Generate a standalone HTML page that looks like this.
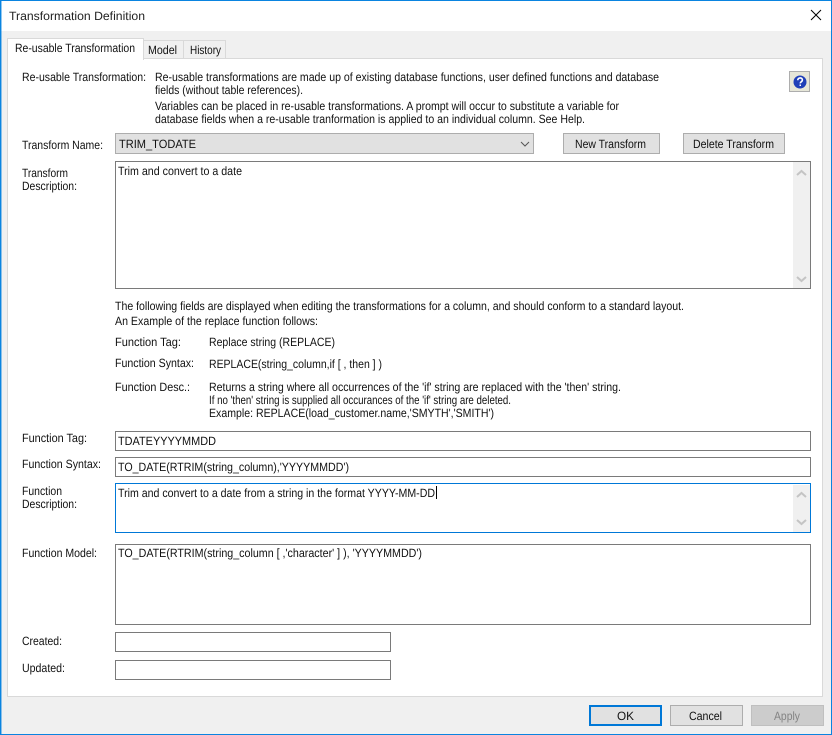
<!DOCTYPE html>
<html><head><meta charset="utf-8"><title>Transformation Definition</title>
<style>
html,body{margin:0;padding:0;background:#f0f0f0}
svg{display:block}
text{font-family:"Liberation Sans",sans-serif;font-size:12px;fill:#111;white-space:pre}
</style></head><body>
<svg width="832" height="735" viewBox="0 0 832 735" xmlns="http://www.w3.org/2000/svg" shape-rendering="crispEdges">
<rect width="832" height="735" fill="#0a84e0"/>
<rect x="1" y="1" width="830" height="733" fill="#f0f0f0"/>
<rect x="1" y="1" width="830" height="30" fill="#fff"/>
<rect x="1" y="1" width="1" height="733" fill="#0a84e0" opacity="0.45"/>
<!-- page -->
<rect x="7.5" y="58.5" width="815" height="638" fill="#fff" stroke="#d9d9d9"/>
<!-- tabs -->
<rect x="143.5" y="40.5" width="40" height="18" fill="#f0f0f0" stroke="#d9d9d9"/>
<rect x="183.5" y="40.5" width="42" height="18" fill="#f0f0f0" stroke="#d9d9d9"/>
<rect x="7.5" y="38.5" width="136" height="21" fill="#fff" stroke="#d9d9d9"/>
<rect x="8" y="57" width="135" height="3" fill="#fff"/>
<!-- close -->
<path d="M811 10L821 20M821 10L811 20" stroke="#000" stroke-width="1" fill="none" shape-rendering="auto"/>
<!-- help -->
<rect x="789.5" y="71.5" width="20" height="20" fill="#e6e6d8" stroke="#adadad"/>
<circle cx="800" cy="82" r="6.5" fill="#1f3fb8" shape-rendering="auto"/>
<path d="M797.8 80.2c0-3 4.6-3 4.6-.2 0 1.8-2.2 1.8-2.2 3.4" stroke="#fff" stroke-width="1.6" fill="none" shape-rendering="auto"/>
<rect x="799.3" y="84.4" width="1.8" height="1.8" fill="#fff"/>
<!-- combo -->
<rect x="115.5" y="133.5" width="418" height="20" fill="#e1e1e1" stroke="#adadad"/>
<path d="M521 142l4 4 4-4" stroke="#555" fill="none" shape-rendering="auto"/>
<!-- buttons -->
<rect x="563.5" y="133.5" width="96" height="20" fill="#e1e1e1" stroke="#adadad"/>
<rect x="683.5" y="133.5" width="101" height="20" fill="#e1e1e1" stroke="#adadad"/>
<!-- boxes -->
<rect x="115.5" y="161.5" width="695" height="127" fill="#fff" stroke="#7a7a7a"/>
<rect x="793" y="162" width="17" height="126" fill="#f0f0f0"/>
<path d="M797 175l4.500-4 4.500 4M797 277l4.500 4 4.500-4" stroke="#c4c4c4" stroke-width="2" fill="none" shape-rendering="auto"/>
<rect x="115.5" y="431.500" width="695" height="19" fill="#fff" stroke="#7a7a7a"/>
<rect x="115.5" y="457.500" width="695" height="19" fill="#fff" stroke="#7a7a7a"/>
<rect x="115.5" y="483.500" width="695" height="49" fill="#fff" stroke="#0078d7"/>
<rect x="793" y="485" width="17" height="47" fill="#f0f0f0"/>
<path d="M797 497l4.500-4 4.500 4M797 520l4.500 4 4.500-4" stroke="#c4c4c4" stroke-width="2" fill="none" shape-rendering="auto"/>
<rect x="436" y="486" width="1" height="13" fill="#000"/>
<rect x="115.5" y="544.500" width="695" height="80" fill="#fff" stroke="#7a7a7a"/>
<rect x="115.5" y="632.500" width="275" height="19" fill="#fff" stroke="#7a7a7a"/>
<rect x="115.5" y="660.500" width="275" height="19" fill="#fff" stroke="#7a7a7a"/>
<!-- bottom buttons -->
<rect x="590" y="706" width="71" height="19" fill="#e1e1e1" stroke="#0078d7" stroke-width="2"/>
<rect x="670.500" y="705.500" width="72" height="20" fill="#e1e1e1" stroke="#adadad"/>
<rect x="751.500" y="705.500" width="72" height="20" fill="#cccccc" stroke="#bfbfbf"/>

<g text-rendering="geometricPrecision" shape-rendering="auto" lengthAdjust="spacingAndGlyphs">
<text lengthAdjust="spacingAndGlyphs" x="9" y="20" textLength="136" style="fill:#222">Transformation Definition</text>
<text lengthAdjust="spacingAndGlyphs" x="15" y="52" textLength="120">Re-usable Transformation</text>
<text lengthAdjust="spacingAndGlyphs" x="148" y="54" textLength="29">Model</text>
<text lengthAdjust="spacingAndGlyphs" x="190" y="54" textLength="31">History</text>
<text lengthAdjust="spacingAndGlyphs" x="22" y="81" textLength="124">Re-usable Transformation:</text>
<text lengthAdjust="spacingAndGlyphs" x="155" y="81" textLength="504">Re-usable transformations are made up of existing database functions, user defined functions and database</text>
<text lengthAdjust="spacingAndGlyphs" x="155" y="94" textLength="148">fields (without table references).</text>
<text lengthAdjust="spacingAndGlyphs" x="155" y="110" textLength="464">Variables can be placed in re-usable transformations. A prompt will occur to substitute a variable for</text>
<text lengthAdjust="spacingAndGlyphs" x="155" y="123" textLength="430">database fields when a re-usable tranformation is applied to an individual column. See Help.</text>
<text lengthAdjust="spacingAndGlyphs" x="22" y="149" textLength="81">Transform Name:</text>
<text lengthAdjust="spacingAndGlyphs" x="119" y="148" textLength="77">TRIM_TODATE</text>
<text lengthAdjust="spacingAndGlyphs" x="575" y="148" textLength="71">New Transform</text>
<text lengthAdjust="spacingAndGlyphs" x="693" y="148" textLength="81">Delete Transform</text>
<text lengthAdjust="spacingAndGlyphs" x="22" y="177" textLength="46">Transform</text>
<text lengthAdjust="spacingAndGlyphs" x="22" y="190" textLength="55">Description:</text>
<text lengthAdjust="spacingAndGlyphs" x="118" y="175" textLength="124">Trim and convert to a date</text>
<text lengthAdjust="spacingAndGlyphs" x="115" y="310" textLength="569">The following fields are displayed when editing the transformations for a column, and should conform to a standard layout.</text>
<text lengthAdjust="spacingAndGlyphs" x="115" y="325" textLength="203">An Example of the replace function follows:</text>
<text lengthAdjust="spacingAndGlyphs" x="115" y="346" textLength="66">Function Tag:</text>
<text lengthAdjust="spacingAndGlyphs" x="209" y="346" textLength="126">Replace string (REPLACE)</text>
<text lengthAdjust="spacingAndGlyphs" x="115" y="367" textLength="79">Function Syntax:</text>
<text lengthAdjust="spacingAndGlyphs" x="209" y="368" textLength="173">REPLACE(string_column,if [ , then ] )</text>
<text lengthAdjust="spacingAndGlyphs" x="115" y="391" textLength="75">Function Desc.:</text>
<text lengthAdjust="spacingAndGlyphs" x="209" y="391" textLength="412">Returns a string where all occurrences of the 'if' string are replaced with the 'then' string.</text>
<text lengthAdjust="spacingAndGlyphs" x="209" y="404" textLength="302">If no 'then' string is supplied all occurances of the 'if' string are deleted.</text>
<text lengthAdjust="spacingAndGlyphs" x="209" y="417" textLength="285">Example: REPLACE(load_customer.name,'SMYTH','SMITH')</text>
<text lengthAdjust="spacingAndGlyphs" x="22" y="442" textLength="65">Function Tag:</text>
<text lengthAdjust="spacingAndGlyphs" x="118" y="445" textLength="98">TDATEYYYYMMDD</text>
<text lengthAdjust="spacingAndGlyphs" x="22" y="468" textLength="79">Function Syntax:</text>
<text lengthAdjust="spacingAndGlyphs" x="118" y="471" textLength="231">TO_DATE(RTRIM(string_column),'YYYYMMDD')</text>
<text lengthAdjust="spacingAndGlyphs" x="22" y="495" textLength="40">Function</text>
<text lengthAdjust="spacingAndGlyphs" x="22" y="508" textLength="55">Description:</text>
<text lengthAdjust="spacingAndGlyphs" x="118" y="497" textLength="317">Trim and convert to a date from a string in the format YYYY-MM-DD</text>
<text lengthAdjust="spacingAndGlyphs" x="22" y="557" textLength="75">Function Model:</text>
<text lengthAdjust="spacingAndGlyphs" x="118" y="557" textLength="304">TO_DATE(RTRIM(string_column [ ,'character' ] ), 'YYYYMMDD')</text>
<text lengthAdjust="spacingAndGlyphs" x="22" y="645" textLength="40">Created:</text>
<text lengthAdjust="spacingAndGlyphs" x="22" y="672" textLength="43">Updated:</text>
<text lengthAdjust="spacingAndGlyphs" x="617" y="720" textLength="17">OK</text>
<text lengthAdjust="spacingAndGlyphs" x="689" y="720" textLength="33">Cancel</text>
<text lengthAdjust="spacingAndGlyphs" x="774" y="720" textLength="26" style="fill:#838383">Apply</text>
</g>
</svg>
</body></html>
